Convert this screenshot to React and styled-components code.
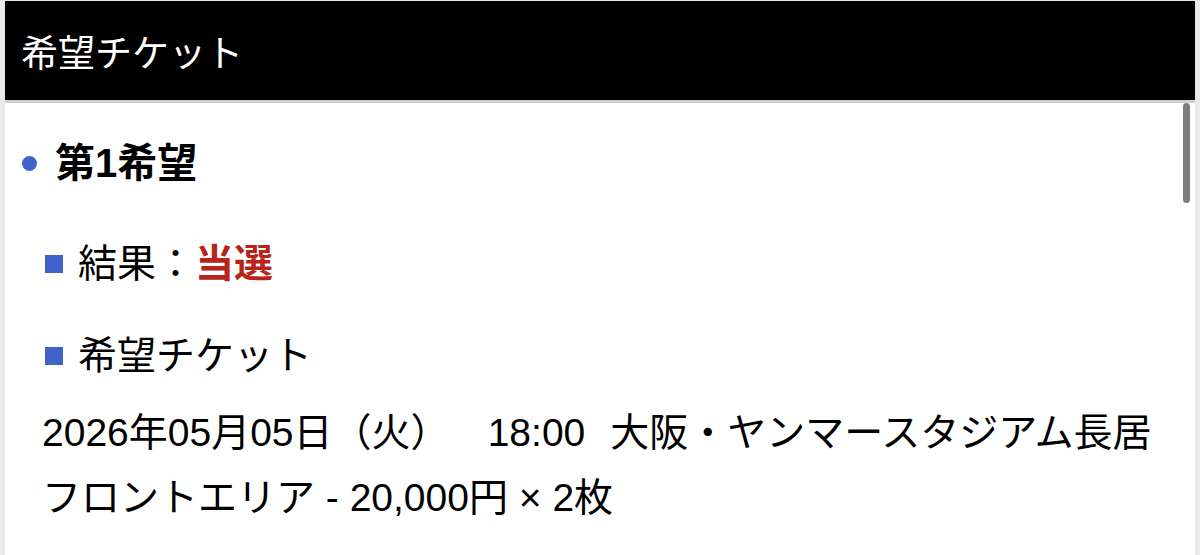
import styled, { createGlobalStyle } from "styled-components";

const GlobalStyle = createGlobalStyle`
  html, body {
    margin: 0;
    padding: 0;
    background: #e9e9e9;
  }
  body {
    font-family: "Liberation Sans", "Noto Sans CJK JP", sans-serif;
    color: #000;
  }
`;

const Frame = styled.div`
  height: 555px;
  padding: 1px 5px 0 5px;
  box-sizing: border-box;
  background: #e9e9e9;
  overflow: hidden;
`;

const Panel = styled.section`
  position: relative;
  height: 100%;
  background: #fff;
`;

const Header = styled.header`
  display: flex;
  align-items: center;
  height: 99px;
  padding-left: 16px;
  background: #000;
  border-bottom: 3px solid #cfcfcf;
  color: #fff;
  font-size: 37px;
  font-weight: 400;
`;

const Scrollbar = styled.div`
  position: absolute;
  top: 102px;
  right: 5px;
  width: 7px;
  height: 100px;
  border-radius: 4px;
  background: #7d7d7d;
`;

const Body = styled.div`
  padding: 36px 0 0 17px;
`;

const Heading = styled.h2`
  display: flex;
  align-items: center;
  gap: 18px;
  margin: 0 0 47px;
  font-size: 40px;
  font-weight: 700;
  line-height: 48px;

  &::before {
    content: "";
    width: 15px;
    height: 15px;
    border-radius: 50%;
    background: #3f63c9;
  }
`;

const Item = styled.div`
  display: flex;
  align-items: center;
  gap: 15px;
  margin: 0 0 ${(p) => p.$spacing}px 23px;
  font-size: 39px;
  line-height: 60px;

  &::before {
    content: "";
    width: 18px;
    height: 18px;
    background: #3f63c9;
  }
`;

const Result = styled.strong`
  color: #b8231b;
  font-weight: 700;
`;

const Detail = styled.p`
  margin: 0 0 0 20px;
  font-size: 39px;
  line-height: 65px;
  white-space: pre;
`;

export default function App() {
  return (
    <>
      <GlobalStyle />
      <Frame>
        <Panel>
          <Header>希望チケット</Header>
          <Scrollbar />
          <Body>
            <Heading>第1希望</Heading>
            <Item $spacing={32}>
              <span>
                結果：<Result>当選</Result>
              </span>
            </Item>
            <Item $spacing={14}>希望チケット</Item>
            <Detail>{"2026年05月05日（火）\u3000 \u200918:00  \u200a大阪・ヤンマースタジアム長居"}</Detail>
            <Detail>フロントエリア - 20,000円 × 2枚</Detail>
          </Body>
        </Panel>
      </Frame>
    </>
  );
}
